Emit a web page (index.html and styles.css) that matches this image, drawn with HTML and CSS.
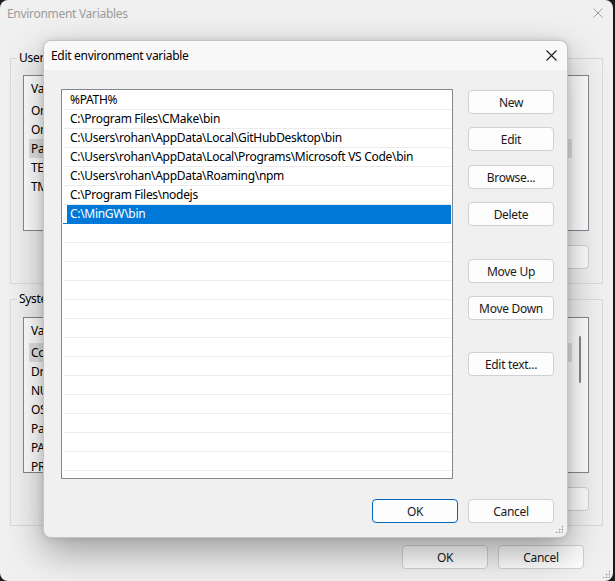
FILE: index.html
```html
<!DOCTYPE html>
<html lang="en">
<head>
    <meta charset="UTF-8">
    <title>Environment Variables</title>
    <link rel="stylesheet" href="styles.css">
</head>
<body>
    <div class="window">
        <div class="titlebar">
            <span class="title">Environment Variables</span>
            <svg class="close" width="10" height="10" viewBox="0 0 10 10"><path d="M0.5 0.5 L9.5 9.5 M9.5 0.5 L0.5 9.5" stroke="#a0a0a0" stroke-width="1"/></svg>
        </div>

        <div class="group group-user">
            <span class="group-label">User variables for rohan</span>
            <div class="varlist">
                <div class="var-head"><span class="col-name">Variable</span></div>
                <div class="var-row"><span class="col-name">OneDrive</span></div>
                <div class="var-row"><span class="col-name">OneDriveConsumer</span></div>
                <div class="var-row active"><span class="col-name">Path</span></div>
                <div class="var-row"><span class="col-name">TEMP</span></div>
                <div class="var-row"><span class="col-name">TMP</span></div>
            </div>
            <div class="btn-row">
                <button class="btn">New...</button>
                <button class="btn">Edit...</button>
                <button class="btn">Delete</button>
            </div>
        </div>

        <div class="group group-system">
            <span class="group-label">System variables</span>
            <div class="varlist">
                <div class="var-head"><span class="col-name">Variable</span></div>
                <div class="var-row active"><span class="col-name">ComSpec</span></div>
                <div class="var-row"><span class="col-name">DriverData</span></div>
                <div class="var-row"><span class="col-name">NUMBER_OF_PROCESSORS</span></div>
                <div class="var-row"><span class="col-name">OS</span></div>
                <div class="var-row"><span class="col-name">Path</span></div>
                <div class="var-row"><span class="col-name">PATHEXT</span></div>
                <div class="var-row"><span class="col-name">PROCESSOR_ARCHITECTURE</span></div>
                <div class="scroll-thumb"></div>
            </div>
            <div class="btn-row">
                <button class="btn">New...</button>
                <button class="btn">Edit...</button>
                <button class="btn">Delete</button>
            </div>
        </div>

        <div class="footer">
            <button class="btn">OK</button>
            <button class="btn">Cancel</button>
        </div>
        <div class="grip grip-window"></div>

        <div class="dialog">
            <div class="dlg-titlebar">
                <span class="dlg-title">Edit environment variable</span>
                <svg class="dlg-close" width="11" height="11" viewBox="0 0 11 11"><path d="M0.5 0.5 L10.5 10.5 M10.5 0.5 L0.5 10.5" stroke="#1b1b1b" stroke-width="1.1"/></svg>
            </div>
            <div class="dlg-body">
                <div class="path-list">
                    <div class="path-row"><span>%PATH%</span></div>
                    <div class="path-row"><span>C:\Program Files\CMake\bin</span></div>
                    <div class="path-row"><span>C:\Users\rohan\AppData\Local\GitHubDesktop\bin</span></div>
                    <div class="path-row"><span>C:\Users\rohan\AppData\Local\Programs\Microsoft VS Code\bin</span></div>
                    <div class="path-row"><span>C:\Users\rohan\AppData\Roaming\npm</span></div>
                    <div class="path-row"><span>C:\Program Files\nodejs</span></div>
                    <div class="path-row selected"><span>C:\MinGW\bin</span></div>
                    <div class="path-row"></div>
                    <div class="path-row"></div>
                    <div class="path-row"></div>
                    <div class="path-row"></div>
                    <div class="path-row"></div>
                    <div class="path-row"></div>
                    <div class="path-row"></div>
                    <div class="path-row"></div>
                    <div class="path-row"></div>
                    <div class="path-row"></div>
                    <div class="path-row"></div>
                    <div class="path-row"></div>
                    <div class="path-row"></div>
                </div>
                <div class="side-buttons">
                    <button class="btn">New</button>
                    <button class="btn">Edit</button>
                    <button class="btn">Browse...</button>
                    <button class="btn">Delete</button>
                    <button class="btn move-up">Move Up</button>
                    <button class="btn">Move Down</button>
                    <button class="btn edit-text">Edit text...</button>
                </div>
            </div>
            <div class="dlg-footer">
                <button class="btn btn-default">OK</button>
                <button class="btn">Cancel</button>
            </div>
            <div class="grip grip-dialog"></div>
        </div>
    </div>
</body>
</html>
```

FILE: styles.css
```css
body {
    margin: 0;
    background-color: #1c1c1c;
    font-family: "Segoe UI", "Noto Sans", sans-serif;
    font-size: 12px;
    letter-spacing: -0.3px;
    color: #000;
}
.window {
    position: relative;
    width: 613px;
    height: 581px;
    background-color: #f0f0f0;
    border-radius: 8px;
    overflow: hidden;
    display: flex;
    flex-direction: column;
}
.titlebar {
    height: 26px;
    display: flex;
    align-items: center;
    justify-content: space-between;
    padding: 0 10px 0 7px;
}
.title { color: #9b9b9b; }

.group {
    position: relative;
    margin-left: 10px;
    width: 593px;
    box-sizing: border-box;
    border: 1px solid #d9d9d9;
    padding: 16px 13px 14px 12px;
}
.group-user { margin-top: 32px; }
.group-system { margin-top: 15px; padding-top: 17px; }
.group-label {
    position: absolute;
    top: -9px;
    left: 6px;
    padding: 0 2px;
    background-color: #f0f0f0;
    line-height: 16px;
}
.varlist {
    position: relative;
    height: 156px;
    box-sizing: border-box;
    border: 1px solid #828790;
    background-color: #fff;
    overflow: hidden;
}
.var-head {
    height: 25px;
    width: 543px;
    display: flex;
    align-items: center;
    padding-left: 7px;
    box-sizing: border-box;
}
.var-row {
    height: 19px;
    width: 543px;
    margin-left: 5px;
    padding-left: 2px;
    box-sizing: border-box;
    display: flex;
    align-items: center;
}
.var-row.active { background-color: #e3e3e3; }
.col-name { width: 190px; }
.scroll-thumb {
    position: absolute;
    right: 7px;
    top: 18px;
    width: 2px;
    height: 47px;
    background-color: #8a8a8a;
    border-radius: 1px;
}
.btn-row {
    margin-top: 14px;
    display: flex;
    justify-content: flex-end;
    gap: 10px;
}

.btn {
    width: 86px;
    height: 24px;
    box-sizing: border-box;
    border: 1px solid #d0d0d0;
    border-radius: 4px;
    background-color: #fdfdfd;
    font-family: inherit;
    font-size: 12px;
    letter-spacing: -0.3px;
    color: #1a1a1a;
    padding: 0;
}
.footer {
    margin-top: 19px;
    margin-right: 29px;
    display: flex;
    justify-content: flex-end;
    gap: 10px;
}

.grip {
    position: absolute;
    right: 3px;
    bottom: 3px;
    width: 8px;
    height: 8px;
    background:
        radial-gradient(circle, #a8a8a8 0.9px, transparent 1.1px) 0 0 / 3px 3px;
    clip-path: polygon(100% 0, 100% 100%, 0 100%);
}

.dialog {
    position: absolute;
    left: 43px;
    top: 40px;
    width: 525px;
    height: 498px;
    box-sizing: border-box;
    border: 1px solid #c4c4c4;
    border-radius: 8px;
    background-color: #f0f0f0;
    box-shadow: 0 14px 36px rgba(0, 0, 0, 0.34), 0 0 7px rgba(0, 0, 0, 0.12);
    display: flex;
    flex-direction: column;
}
.dlg-titlebar {
    height: 29px;
    display: flex;
    align-items: center;
    justify-content: space-between;
    padding: 0 10px 0 7px;
    background-color: #f9f9f9;
    border-radius: 8px 8px 0 0;
}
.dlg-body {
    display: flex;
    padding: 18px 0 0 17px;
}
.path-list {
    width: 392px;
    height: 390px;
    box-sizing: border-box;
    border: 1px solid #828790;
    background-color: #fff;
    padding: 1px 0 0 1px;
    overflow: hidden;
    margin-top: 1px;
}
.path-row {
    height: 19px;
    box-sizing: border-box;
    border-bottom: 1px solid #ebebeb;
    margin-right: 1px;
    display: flex;
    align-items: center;
}
.path-row span {
    display: block;
    flex: 1;
    align-self: stretch;
    line-height: 18px;
    margin-left: 4px;
    padding-left: 3px;
}
.path-row.selected { border-bottom-color: #0078d7; }
.path-row.selected span {
    background-color: #0078d7;
    color: #fff;
}
.side-buttons {
    margin-left: 15px;
    padding-top: 2px;
    display: flex;
    flex-direction: column;
    gap: 13px;
}
.side-buttons .btn:nth-child(3) { margin-top: 1px; }
.move-up { margin-top: 20px; }
.edit-text { margin-top: 19px; }
.dlg-footer {
    margin-top: 20px;
    padding-right: 13px;
    display: flex;
    justify-content: flex-end;
    gap: 10px;
}
.btn-default { border-color: #0067c0; }
.grip-dialog { right: 4px; bottom: 4px; }
```
